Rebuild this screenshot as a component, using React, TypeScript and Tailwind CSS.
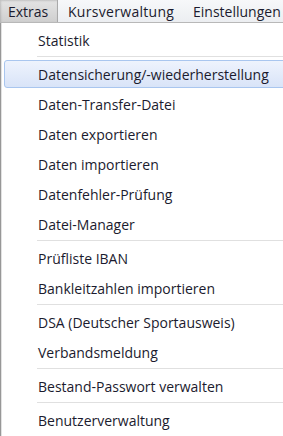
import React from 'react';

type Eintrag = { label: string; aktiv?: boolean } | 'trenner';

const eintraege: Eintrag[] = [
   { label: 'Statistik' },
   'trenner',
   { label: 'Datensicherung/-wiederherstellung', aktiv: true },
   { label: 'Daten-Transfer-Datei' },
   { label: 'Daten exportieren' },
   { label: 'Daten importieren' },
   { label: 'Datenfehler-Prüfung' },
   { label: 'Datei-Manager' },
   'trenner',
   { label: 'Prüfliste IBAN' },
   { label: 'Bankleitzahlen importieren' },
   'trenner',
   { label: 'DSA (Deutscher Sportausweis)' },
   { label: 'Verbandsmeldung' },
   'trenner',
   { label: 'Bestand-Passwort verwalten' },
   'trenner',
   { label: 'Benutzerverwaltung' },
];

export default function App() {
   return (
      <div
         className="w-[283px] h-[436px] overflow-hidden bg-white text-[14px] text-[#1b1b2e]"
         style={{ fontFamily: '"Open Sans", "Noto Sans", sans-serif' }}
      >
         {/* Menüleiste */}
         <div className="flex h-[23px] items-stretch bg-gradient-to-b from-[#f7f8fa] to-[#eceef1] border-b border-[#b8b8b8] whitespace-nowrap">
            <div className="flex items-center w-[58px] pl-[8px] bg-gradient-to-b from-[#e4e4e4] to-[#cfcfcf] border-r border-[#a9a9a9] shadow-[inset_1px_1px_2px_rgba(0,0,0,0.15)]">
               Extras
            </div>
            <div className="flex items-center pl-[10px] w-[135px] tracking-[0.3px]">Kursverwaltung</div>
            <div className="flex items-center">Einstellungen</div>
         </div>

         {/* Dropdown */}
         <div className="border-l border-[#979797] h-[413px] pt-[2px] shadow-[inset_1px_0_0_#e2e2e2]">
            {eintraege.map((e, i) =>
               e === 'trenner' ? (
                  <div key={i} className="h-[4px] flex items-center pl-[36px]">
                     <div className="w-full h-[2px] border-t border-[#e0e0e0] border-b-white" />
                  </div>
               ) : (
                  <div key={i} className="h-[30px] pl-[3px] py-[1px]">
                     <div
                        className={
                           e.aktiv
                              ? 'h-full -mr-[4px] flex items-center pl-[33px] rounded-[3px] border border-[#a9c6ef] bg-gradient-to-b from-[#eef3fd] to-[#d9e4f8] whitespace-nowrap'
                              : 'h-full flex items-center pl-[34px] whitespace-nowrap'
                        }
                     >
                        {e.label}
                     </div>
                  </div>
               )
            )}
         </div>
      </div>
   );
}
